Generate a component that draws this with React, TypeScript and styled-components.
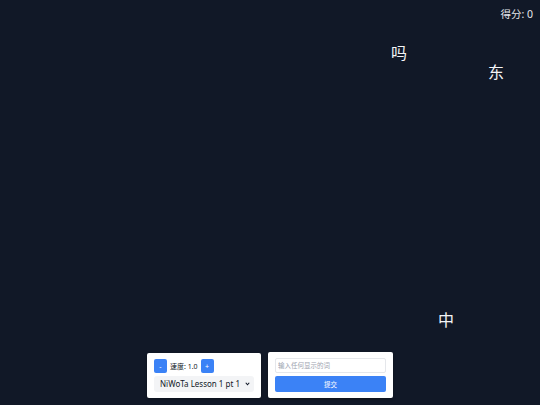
import React, { useState } from 'react';
import styled, { createGlobalStyle } from 'styled-components';

const GlobalStyle = createGlobalStyle`
  html, body {
    margin: 0;
    padding: 0;
    background: #111827;
    font-family: "Noto Sans", "Noto Sans CJK SC", sans-serif;
  }
`;

const Stage = styled.div`
  position: relative;
  width: 540px;
  height: 405px;
  overflow: hidden;
  background: #111827;
  display: flex;
  flex-direction: column;
  justify-content: flex-end;
`;

const Score = styled.div`
  position: absolute;
  top: 6px;
  right: 7px;
  color: #e5e7eb;
  font-size: 10.5px;
`;

const Word = styled.div<{ $x: number; $y: number }>`
  position: absolute;
  left: ${p => p.$x}px;
  top: ${p => p.$y}px;
  color: #f3f4f6;
  font-size: 16px;
  line-height: 1;
  font-family: "Noto Sans CJK SC", sans-serif;
`;

const Controls = styled.div`
  display: flex;
  justify-content: center;
  align-items: flex-end;
  gap: 7px;
  padding-bottom: 7px;
`;

const Panel = styled.div<{ $width: number }>`
  width: ${p => p.$width}px;
  box-sizing: border-box;
  background: #ffffff;
  border-radius: 2px;
  padding: 6px 7px;
  display: flex;
  flex-direction: column;
  gap: 3px;
  box-shadow: 0 1px 3px rgba(0, 0, 0, 0.3);
`;

const Row = styled.div`
  display: flex;
  align-items: center;
  gap: 3px;
`;

const SmallButton = styled.button`
  width: 13px;
  height: 14px;
  padding: 0;
  border: none;
  border-radius: 2px;
  background: #3b82f6;
  color: #ffffff;
  font-size: 7px;
  line-height: 1;
  font-family: inherit;
`;

const Speed = styled.span`
  font-size: 7px;
  color: #111827;
`;

const SelectWrap = styled.div`
  position: relative;
  height: 16px;
`;

const Select = styled.select`
  appearance: none;
  display: block;
  box-sizing: border-box;
  width: 100%;
  height: 16px;
  margin: 0;
  border: none;
  border-radius: 3px;
  background: #f3f4f6;
  color: #111827;
  font-size: 8px;
  line-height: 16px;
  font-family: inherit;
  padding: 0 6px;
  outline: none;
`;

const Chevron = styled.svg`
  position: absolute;
  right: 4px;
  top: 6px;
  width: 5px;
  height: 4px;
  pointer-events: none;
`;

const Input = styled.input`
  box-sizing: border-box;
  width: 100%;
  height: 15px;
  border: 1px solid #e5e7eb;
  border-radius: 2px;
  padding: 0 2px;
  font-size: 6.5px;
  font-family: inherit;
  &::placeholder {
    color: #9ca3af;
  }
`;

const Submit = styled.button`
  width: 100%;
  height: 16px;
  border: none;
  border-radius: 2px;
  background: #3b82f6;
  color: #ffffff;
  font-size: 6.5px;
  font-family: inherit;
`;

const words = [
  { text: '吗', x: 391, y: 44 },
  { text: '东', x: 488, y: 63 },
  { text: '中', x: 438, y: 311 },
];

export default function App() {
  const [speed, setSpeed] = useState(1.0);
  return (
    <Stage>
      <GlobalStyle />
      <Score>得分: 0</Score>
      {words.map(w => (
        <Word key={w.text} $x={w.x} $y={w.y}>{w.text}</Word>
      ))}
      <Controls>
        <Panel $width={114}>
          <Row>
            <SmallButton onClick={() => setSpeed(s => Math.max(0.1, s - 0.1))}>-</SmallButton>
            <Speed>速度: {speed.toFixed(1)}</Speed>
            <SmallButton onClick={() => setSpeed(s => s + 0.1)}>+</SmallButton>
          </Row>
          <SelectWrap>
            <Select defaultValue="1">
              <option value="1">NiWoTa Lesson 1 pt 1</option>
            </Select>
            <Chevron viewBox="0 0 10 8">
              <path d="M1.5 1.5 L5 5.5 L8.5 1.5" fill="none" stroke="#111827" strokeWidth="2.2" />
            </Chevron>
          </SelectWrap>
        </Panel>
        <Panel $width={125}>
          <Input placeholder="输入任何显示的词" />
          <Submit>提交</Submit>
        </Panel>
      </Controls>
    </Stage>
  );
}
